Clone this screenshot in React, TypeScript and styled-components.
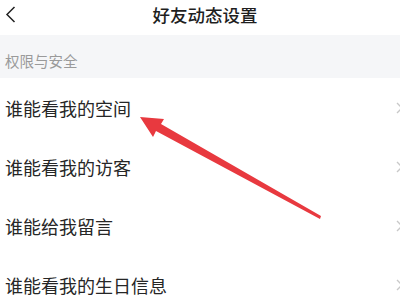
import React from 'react';
import styled, { createGlobalStyle } from 'styled-components';

const GlobalStyle = createGlobalStyle`
  html, body {
    margin: 0;
    padding: 0;
    background: #ffffff;
  }
  body {
    font-family: "Noto Sans CJK SC", "Noto Sans", sans-serif;
    overflow: hidden;
  }
`;

const items = ['谁能看我的空间', '谁能看我的访客', '谁能给我留言', '谁能看我的生日信息'];

const App = () => {
  return (
    <Page>
      <GlobalStyle />
      <Header>
        <BackButton>
          <svg width="11" height="17" viewBox="0 0 11 17">
            <path d="M9.5 1 L2 8.5 L9.5 16" fill="none" stroke="#222" strokeWidth="1.5" />
          </svg>
        </BackButton>
        <Title>好友动态设置</Title>
      </Header>
      <SectionLabel>权限与安全</SectionLabel>
      <List>
        {items.map((text) => (
          <Row key={text}>
            <RowText>{text}</RowText>
            <Chevron>
              <svg width="8" height="12" viewBox="0 0 8 12">
                <path d="M1 1 L6 6 L1 11" fill="none" stroke="#c8c8c8" strokeWidth="1.3" />
              </svg>
            </Chevron>
          </Row>
        ))}
      </List>
      <Arrow width="400" height="300" viewBox="0 0 400 300">
        <polygon points="320,219 321,216 161,124 164,119 140,117 153,137 156,131" fill="#e8393f" />
      </Arrow>
    </Page>
  );
};

const Page = styled.div`
  position: relative;
  width: 400px;
  height: 300px;
  overflow: hidden;
  background: #fff;
`;

const Header = styled.div`
  position: relative;
  height: 35px;
  display: flex;
  align-items: flex-start;
  justify-content: center;
  padding-left: 10px;
  box-sizing: border-box;
`;

const BackButton = styled.div`
  position: absolute;
  left: 5px;
  top: 6px;
  display: flex;
`;

const Title = styled.div`
  font-size: 17.5px;
  line-height: 29px;
  color: #1f1f1f;
  font-weight: 500;
`;

const SectionLabel = styled.div`
  height: 43px;
  box-sizing: border-box;
  background: #f5f6f8;
  display: flex;
  align-items: flex-end;
  padding: 0 0 7px 5px;
  font-size: 14.5px;
  line-height: 20px;
  color: #9a9a9a;
`;

const List = styled.div`
  display: flex;
  flex-direction: column;
`;

const Row = styled.div`
  height: 59px;
  display: flex;
  align-items: center;
  justify-content: space-between;
  padding-left: 5px;
  margin-right: -4px;
`;

const RowText = styled.div`
  font-size: 18px;
  line-height: 24px;
  color: #262626;
`;

const Chevron = styled.div`
  display: flex;
`;

const Arrow = styled.svg`
  position: absolute;
  left: 0;
  top: 0;
  pointer-events: none;
`;

export default App;
